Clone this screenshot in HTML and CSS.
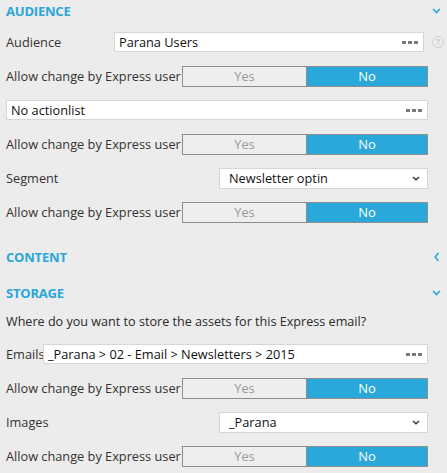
FILE: index.html
```html
<!DOCTYPE html>
<html>
<head>
<meta charset="utf-8">
<link rel="stylesheet" href="styles.css">
</head>
<body>
<div class="panel">
  <section class="section section-audience">
    <div class="sec-head">
      <span class="sec-title">AUDIENCE</span>
      <svg class="chev" width="9" height="6" viewBox="0 0 9 6"><path d="M1 1 L4.5 4.5 L8 1" fill="none" stroke="#2ba6db" stroke-width="1.6"/></svg>
    </div>
    <div class="row row-aud">
      <span class="label label-aud">Audience</span>
      <div class="field field-aud"><span class="ftext">Parana Users</span><span class="dots"><i></i><i></i><i></i></span></div>
      <span class="help">?</span>
    </div>
    <div class="row">
      <span class="label">Allow change by Express user</span>
      <div class="toggle"><span class="t-yes">Yes</span><span class="t-no">No</span></div>
    </div>
    <div class="row">
      <div class="field field-full"><span class="ftext">No actionlist</span><span class="dots"><i></i><i></i><i></i></span></div>
    </div>
    <div class="row">
      <span class="label">Allow change by Express user</span>
      <div class="toggle"><span class="t-yes">Yes</span><span class="t-no">No</span></div>
    </div>
    <div class="row">
      <span class="label">Segment</span>
      <div class="select"><span class="ftext">Newsletter optin</span><svg width="8" height="5" viewBox="0 0 8 5"><path d="M1 1 L4 3.8 L7 1" fill="none" stroke="#333" stroke-width="1.4"/></svg></div>
    </div>
    <div class="row">
      <span class="label">Allow change by Express user</span>
      <div class="toggle"><span class="t-yes">Yes</span><span class="t-no">No</span></div>
    </div>
  </section>
  <section class="section section-content">
    <div class="sec-head">
      <span class="sec-title">CONTENT</span>
      <svg class="chev chev-left" width="6" height="10" viewBox="0 0 6 10"><path d="M4.5 1 L1.2 5 L4.5 9" fill="none" stroke="#2ba6db" stroke-width="1.6"/></svg>
    </div>
  </section>
  <section class="section section-storage">
    <div class="sec-head">
      <span class="sec-title">STORAGE</span>
      <svg class="chev" width="9" height="6" viewBox="0 0 9 6"><path d="M1 1 L4.5 4.5 L8 1" fill="none" stroke="#2ba6db" stroke-width="1.6"/></svg>
    </div>
    <div class="intro">Where do you want to store the assets for this Express email?</div>
    <div class="row">
      <span class="label label-emails">Emails</span>
      <div class="field field-grow"><span class="ftext">_Parana &gt; 02 - Email &gt; Newsletters &gt; 2015</span><span class="dots"><i></i><i></i><i></i></span></div>
    </div>
    <div class="row">
      <span class="label">Allow change by Express user</span>
      <div class="toggle"><span class="t-yes">Yes</span><span class="t-no">No</span></div>
    </div>
    <div class="row">
      <span class="label">Images</span>
      <div class="select"><span class="ftext">_Parana</span><svg width="8" height="5" viewBox="0 0 8 5"><path d="M1 1 L4 3.8 L7 1" fill="none" stroke="#333" stroke-width="1.4"/></svg></div>
    </div>
    <div class="row">
      <span class="label">Allow change by Express user</span>
      <div class="toggle"><span class="t-yes">Yes</span><span class="t-no">No</span></div>
    </div>
  </section>
</div>
</body>
</html>
```
FILE: styles.css
```css
html, body {
  margin: 0;
  padding: 0;
  background: #ececec;
}
body {
  font-family: "Open Sans", "Noto Sans", sans-serif;
  font-size: 12.75px;
  color: #333;
  width: 447px;
  height: 473px;
  overflow: hidden;
}
.panel {
  padding-left: 6px;
  width: 435px;
}
.sec-head {
  height: 22px;
  display: flex;
  align-items: center;
  justify-content: space-between;
}
.sec-title {
  color: #2ba6db;
  font-weight: bold;
  font-size: 13px;
  letter-spacing: -0.2px;
}
.chev-left {
  margin-right: 1px;
}
.section-audience .sec-head {
  margin-bottom: 3px;
}
.section-content {
  margin-top: 17px;
}
.section-storage {
  margin-top: 14px;
}
.row {
  height: 34px;
  display: flex;
  align-items: center;
  width: 422px;
}
.row-aud {
  width: 436px;
}
.intro {
  margin-top: 3px;
  height: 30px;
  line-height: 30px;
  color: #2a2a2a;
  font-size: 12.6px;
}
.label {
  white-space: nowrap;
  color: #333;
  flex: none;
}
.label-aud {
  width: 108px;
}
.label-emails {
  width: 37px;
  overflow: hidden;
}
.field {
  height: 20px;
  box-sizing: border-box;
  background: #fff;
  border: 1px solid #d6d6d6;
  display: flex;
  align-items: center;
  justify-content: space-between;
  padding: 0 5px 0 4px;
  color: #111;
}
.field-aud {
  width: 310px;
  flex: none;
}
.field-full {
  width: 422px;
}
.field-grow {
  flex: 1;
}
.ftext {
  white-space: nowrap;
}
.dots {
  display: flex;
  gap: 2px;
}
.dots i {
  width: 4px;
  height: 3px;
  background: #7a7a7a;
}
.help {
  margin-left: 8px;
  flex: none;
  width: 10px;
  height: 10px;
  border: 1px solid #d0d0d0;
  border-radius: 50%;
  color: #c8c8c8;
  font-size: 8px;
  line-height: 10px;
  text-align: center;
  font-weight: bold;
}
.toggle {
  margin-left: auto;
  width: 246px;
  height: 21px;
  box-sizing: border-box;
  border: 1px solid #8e8e8e;
  display: flex;
  flex: none;
}
.t-yes, .t-no {
  display: flex;
  align-items: center;
  justify-content: center;
}
.t-yes {
  width: 123px;
  background: #eeeeee;
  color: #9a9a9a;
  border-right: 1px solid #8e8e8e;
}
.t-no {
  flex: 1;
  background: #29a8d9;
  color: #fff;
  font-size: 13px;
}
.select {
  margin-left: auto;
  width: 209px;
  height: 21px;
  box-sizing: border-box;
  background: #fff;
  border: 1px solid #d6d6d6;
  display: flex;
  align-items: center;
  justify-content: space-between;
  padding: 0 7px 0 9px;
  color: #111;
  flex: none;
}
```
